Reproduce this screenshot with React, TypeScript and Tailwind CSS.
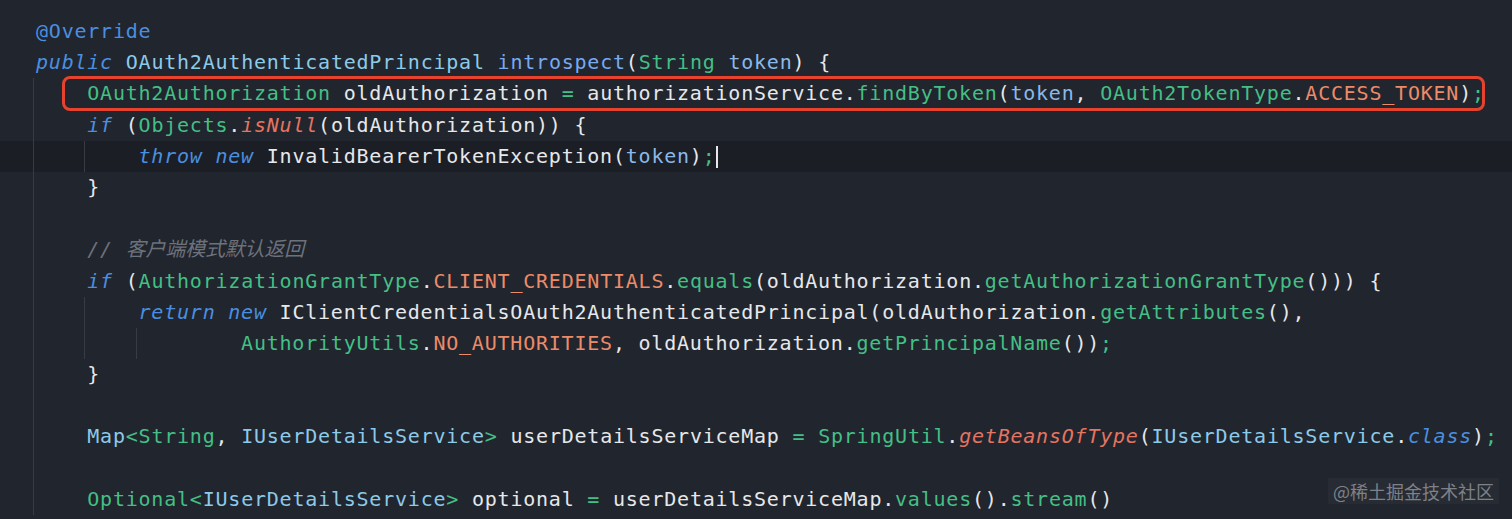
type Tok = [string, string];

const K = "text-[#4a8fe0] italic";
const A = "text-[#4a8fe0]";
const T = "text-[#8ccaea]";
const G = "text-[#44bf86]";
const W = "text-[#e6e8eb]";
const P = "text-[#8ab8ea]";
const O = "text-[#ec8b6a]";
const S = "text-[#e57461] italic";
const C = "text-[#6c727c] italic";
const M = "text-[#79a9ee]";
const CJK = "text-[#6c727c] italic text-[20px] tracking-[-0.2px]";

type LineDef = {
  indent: number;
  guides: number[];
  toks: Tok[];
  current?: boolean;
  cursor?: boolean;
  boxed?: boolean;
};

const lines: LineDef[] = [
  { indent: 0, guides: [], toks: [["@Override", A]] },
  {
    indent: 0,
    guides: [],
    toks: [
      ["public", K], [" ", W], ["OAuth2AuthenticatedPrincipal", T], [" ", W],
      ["introspect", M], ["(", W], ["String", G], [" ", W], ["token", P], [") {", W],
    ],
  },
  {
    indent: 4,
    guides: [0],
    boxed: true,
    toks: [
      ["OAuth2Authorization", G], [" oldAuthorization ", W], ["=", G],
      [" authorizationService.", W], ["findByToken", G], ["(", W], ["token", P],
      [", ", W], ["OAuth2TokenType", G], [".", W], ["ACCESS_TOKEN", O], [")", W], [";", G],
    ],
  },
  {
    indent: 4,
    guides: [0],
    toks: [["if", K], [" (", W], ["Objects", G], [".", W], ["isNull", S], ["(oldAuthorization)) {", W]],
  },
  {
    indent: 8,
    guides: [0, 1],
    current: true,
    cursor: true,
    toks: [
      ["throw", K], [" ", W], ["new", K], [" InvalidBearerTokenException(", W],
      ["token", P], [")", W], [";", G],
    ],
  },
  { indent: 4, guides: [0], toks: [["}", W]] },
  { indent: 4, guides: [0], toks: [] },
  { indent: 4, guides: [0], toks: [["// ", C], ["客户端模式默认返回", CJK]] },
  {
    indent: 4,
    guides: [0],
    toks: [
      ["if", K], [" (", W], ["AuthorizationGrantType", G], [".", W], ["CLIENT_CREDENTIALS", O],
      [".", W], ["equals", G], ["(oldAuthorization.", W], ["getAuthorizationGrantType", G], ["())) {", W],
    ],
  },
  {
    indent: 8,
    guides: [0, 1],
    toks: [
      ["return", K], [" ", W], ["new", K],
      [" IClientCredentialsOAuth2AuthenticatedPrincipal(oldAuthorization.", W],
      ["getAttributes", G], ["(),", W],
    ],
  },
  {
    indent: 16,
    guides: [0, 1, 2],
    toks: [
      ["AuthorityUtils", G], [".", W], ["NO_AUTHORITIES", O], [", oldAuthorization.", W],
      ["getPrincipalName", G], ["())", W], [";", G],
    ],
  },
  { indent: 4, guides: [0], toks: [["}", W]] },
  { indent: 4, guides: [0], toks: [] },
  {
    indent: 4,
    guides: [0],
    toks: [
      ["Map", T], ["<", G], ["String", G], [", ", W], ["IUserDetailsService", T], [">", G],
      [" userDetailsServiceMap ", W], ["=", G], [" ", W], ["SpringUtil", G], [".", W],
      ["getBeansOfType", S], ["(", W], ["IUserDetailsService", T], [".", W], ["class", K],
      [")", W], [";", G],
    ],
  },
  { indent: 4, guides: [0], toks: [] },
  {
    indent: 4,
    guides: [0],
    toks: [
      ["Optional", G], ["<", G], ["IUserDetailsService", T], [">", G], [" optional ", W],
      ["=", G], [" userDetailsServiceMap.", W], ["values", G], ["().", W], ["stream", G], ["()", W],
    ],
  },
];

function Line({ line }: { line: LineDef }) {
  const chunks = Array.from({ length: line.indent / 4 }, (_, i) => i);
  return (
    <div
      className={`relative h-[31.2px] whitespace-pre pl-[36px] leading-[31.2px] ${
        line.current ? "bg-[#1b1e25]" : ""
      }`}
    >
      {chunks.map((i) => (
        <span key={i} className="relative inline-block h-[31.2px] w-[51.28px] align-top">
          {line.guides.includes(i) && (
            <span className="absolute top-0 bottom-0 left-[-3px] w-px bg-[#363b44]" />
          )}
        </span>
      ))}
      {line.toks.map(([t, c], i) => (
        <span key={i} className={c}>
          {t}
        </span>
      ))}
      {line.cursor && (
        <span className="inline-block h-[22px] w-[2px] bg-[#e6e8eb] align-middle" />
      )}
      {line.boxed && (
        <div className="pointer-events-none absolute top-[-2px] left-[62px] h-[35px] w-[1423px] rounded-[8px] border-[3px] border-[#e5432d]" />
      )}
    </div>
  );
}

export default function App() {
  return (
    <div className="relative h-[519px] w-full overflow-hidden bg-[#21252d] pt-[16px] font-['DejaVu_Sans_Mono','Noto_Sans_CJK_SC',monospace] text-[20px] tracking-[0.78px]">
      {lines.map((l, i) => (
        <Line key={i} line={l} />
      ))}
      <div className="absolute top-[478px] left-[1328px] bg-white/[0.03] px-[5px] font-['Noto_Sans_CJK_SC',sans-serif] text-[18px] leading-[26px] tracking-normal text-[#7e8188]">
        @稀土掘金技术社区
      </div>
    </div>
  );
}
